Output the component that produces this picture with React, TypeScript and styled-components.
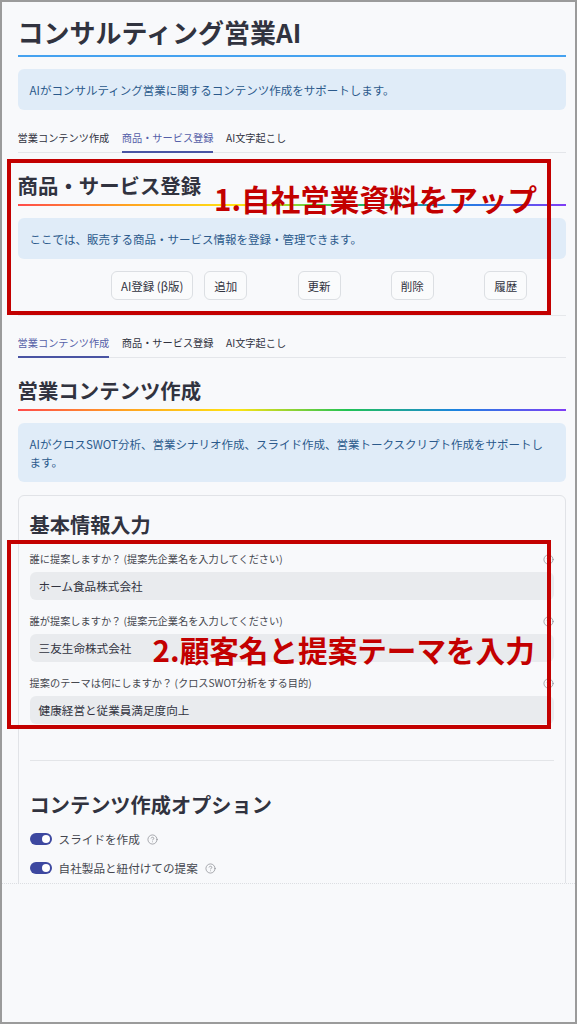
import React from 'react';
import styled, { createGlobalStyle } from 'styled-components';
import { CircleHelp } from 'lucide-react';

const GlobalStyle = createGlobalStyle`
  html, body {
    margin: 0;
    padding: 0;
  }
  body {
    font-family: "Noto Sans CJK JP", "Noto Sans", sans-serif;
    background: #f8f9fb;
    color: #31333f;
  }
`;

const Frame = styled.div`
  width: 577px;
  height: 1024px;
  box-sizing: border-box;
  border: 2px solid #9b9b9b;
  background: #f8f9fb;
  overflow: hidden;
`;

const Viewport = styled.div`
  position: relative;
  height: 881px;
  overflow: hidden;
  border-bottom: 1px dotted #dcdee2;
`;

const Content = styled.div`
  padding: 14px 9.5px 0 15.6px;
`;

const Title = styled.h1`
  margin: 0;
  font-size: 26px;
  line-height: 31px;
  font-weight: 700;
  color: #31333f;
`;

const BlueRule = styled.div`
  height: 2px;
  margin-top: 8px;
  background: #45a2f0;
`;

const RainbowRule = styled.div`
  height: 2px;
  margin-top: 6px;
  background: linear-gradient(to right, #ff4b4b, #ffa421, #ffe312, #21c354, #1c83e1, #803df5);
`;

const Info = styled.div`
  margin-top: 12px;
  padding: 11.5px 12px;
  border-radius: 6px;
  background: #e0ecf8;
  color: #2b5a8c;
  font-size: 11.5px;
  line-height: 18px;
`;

const TabList = styled.div<{ $gap: number }>`
  display: flex;
  gap: 12.5px;
  margin-top: ${p => p.$gap}px;
  box-shadow: inset 0 -1px 0 #e4e6ea;
`;

const Tab = styled.div<{ $active?: boolean }>`
  padding: 7.5px 0 6.5px;
  font-size: 10.2px;
  line-height: 15px;
  color: ${p => (p.$active ? '#5560a8' : '#31333f')};
  border-bottom: 2px solid ${p => (p.$active ? '#4a54a3' : 'transparent')};
`;

const SectionTitle = styled.h2<{ $gap: number }>`
  margin: ${p => p.$gap}px 0 0;
  font-size: 20.4px;
  line-height: 25px;
  font-weight: 700;
  color: #31333f;
`;

const ButtonRow = styled.div`
  display: grid;
  grid-template-columns: repeat(6, minmax(0, 1fr));
  gap: 12px;
  margin-top: 12px;
`;

const ActionButton = styled.button`
  justify-self: start;
  height: 29px;
  padding: 0 9px;
  border: 1px solid #dcdfe3;
  border-radius: 6px;
  background: #fafbfc;
  color: #31333f;
  font-family: inherit;
  font-size: 11.5px;
  white-space: nowrap;
`;

const PanelEnd = styled.div`
  height: 1px;
  margin-top: 15px;
  background: #e6e8eb;
`;

const Card = styled.div`
  margin-top: 13px;
  padding: 16px 11px 100px;
  border: 1px solid #e1e3e7;
  border-radius: 6px;
`;

const CardTitle = styled.h3<{ $gap?: number }>`
  margin: ${p => p.$gap ?? 0}px 0 0;
  font-size: 20.2px;
  line-height: 25px;
  font-weight: 700;
  color: #31333f;
`;

const Field = styled.div<{ $gap: number }>`
  margin-top: ${p => p.$gap}px;
`;

const LabelRow = styled.div`
  display: flex;
  align-items: center;
  justify-content: space-between;
  font-size: 10.2px;
  line-height: 14px;
  color: #45474f;
`;

const HelpIcon = styled(CircleHelp)`
  flex: none;
  color: #85878d;
`;

const Input = styled.div`
  margin-top: 6px;
  height: 28px;
  padding: 0 9px;
  border-radius: 6px;
  background: #e9ebee;
  font-size: 11.6px;
  line-height: 28px;
  color: #31333f;
`;

const Divider = styled.div`
  height: 1px;
  margin-top: 36px;
  background: #e3e5e8;
`;

const ToggleRow = styled.div<{ $gap: number }>`
  display: flex;
  align-items: center;
  gap: 7px;
  height: 18px;
  margin-top: ${p => p.$gap}px;
  font-size: 11.6px;
  color: #45474f;
`;

const Switch = styled.span`
  position: relative;
  flex: none;
  width: 22px;
  height: 12px;
  border-radius: 6px;
  background: #3d48a0;

  &::after {
    content: '';
    position: absolute;
    top: 2px;
    right: 2px;
    width: 8px;
    height: 8px;
    border-radius: 50%;
    background: #fff;
  }
`;

const NoteBox = styled.div<{ $top: number; $height: number }>`
  position: absolute;
  left: 5.4px;
  top: ${p => p.$top}px;
  width: 543.6px;
  height: ${p => p.$height}px;
  box-sizing: border-box;
  border: 4px solid #c30000;
  pointer-events: none;
`;

const NoteText = styled.div<{ $top: number; $left: number }>`
  position: absolute;
  left: ${p => p.$left}px;
  top: ${p => p.$top}px;
  font-size: 29.6px;
  line-height: 30px;
  font-weight: 700;
  color: #c30000;
  white-space: nowrap;
`;

const tabs = ['営業コンテンツ作成', '商品・サービス登録', 'AI文字起こし'];

const fields = [
  { label: '誰に提案しますか？ (提案先企業名を入力してください)', value: 'ホーム食品株式会社' },
  { label: '誰が提案しますか？ (提案元企業名を入力してください)', value: '三友生命株式会社' },
  { label: '提案のテーマは何にしますか？ (クロスSWOT分析をする目的)', value: '健康経営と従業員満足度向上' },
];

const App: React.FC = () => {
  return (
    <>
      <GlobalStyle />
      <Frame>
        <Viewport>
          <Content>
            <Title>コンサルティング営業AI</Title>
            <BlueRule />
            <Info>AIがコンサルティング営業に関するコンテンツ作成をサポートします。</Info>

            <TabList $gap={12}>
              {tabs.map((t, i) => (
                <Tab key={t} $active={i === 1}>{t}</Tab>
              ))}
            </TabList>

            <SectionTitle $gap={20}>商品・サービス登録</SectionTitle>
            <RainbowRule />
            <Info>ここでは、販売する商品・サービス情報を登録・管理できます。</Info>
            <ButtonRow>
              <span />
              <ActionButton>AI登録 (β版)</ActionButton>
              <ActionButton>追加</ActionButton>
              <ActionButton>更新</ActionButton>
              <ActionButton>削除</ActionButton>
              <ActionButton>履歴</ActionButton>
            </ButtonRow>
            <PanelEnd />

            <TabList $gap={11}>
              {tabs.map((t, i) => (
                <Tab key={t} $active={i === 0}>{t}</Tab>
              ))}
            </TabList>

            <SectionTitle $gap={20}>営業コンテンツ作成</SectionTitle>
            <RainbowRule />
            <Info>AIがクロスSWOT分析、営業シナリオ作成、スライド作成、営業トークスクリプト作成をサポートします。</Info>

            <Card>
              <CardTitle>基本情報入力</CardTitle>
              {fields.map((f, i) => (
                <Field key={f.label} $gap={i === 0 ? 15 : 14}>
                  <LabelRow>
                    <span>{f.label}</span>
                    <HelpIcon size={11} strokeWidth={1.5} />
                  </LabelRow>
                  <Input>{f.value}</Input>
                </Field>
              ))}
              <Divider />
              <CardTitle $gap={31}>コンテンツ作成オプション</CardTitle>
              <ToggleRow $gap={13}>
                <Switch />
                <span>スライドを作成</span>
                <HelpIcon size={11} strokeWidth={1.5} />
              </ToggleRow>
              <ToggleRow $gap={11}>
                <Switch />
                <span>自社製品と紐付けての提案</span>
                <HelpIcon size={11} strokeWidth={1.5} />
              </ToggleRow>
            </Card>
          </Content>

          <NoteBox $top={157} $height={156} />
          <NoteText $left={212} $top={182}>1.自社営業資料をアップ</NoteText>
          <NoteBox $top={538} $height={189} />
          <NoteText $left={150.6} $top={633}>2.顧客名と提案テーマを入力</NoteText>
        </Viewport>
      </Frame>
    </>
  );
};

export default App;
